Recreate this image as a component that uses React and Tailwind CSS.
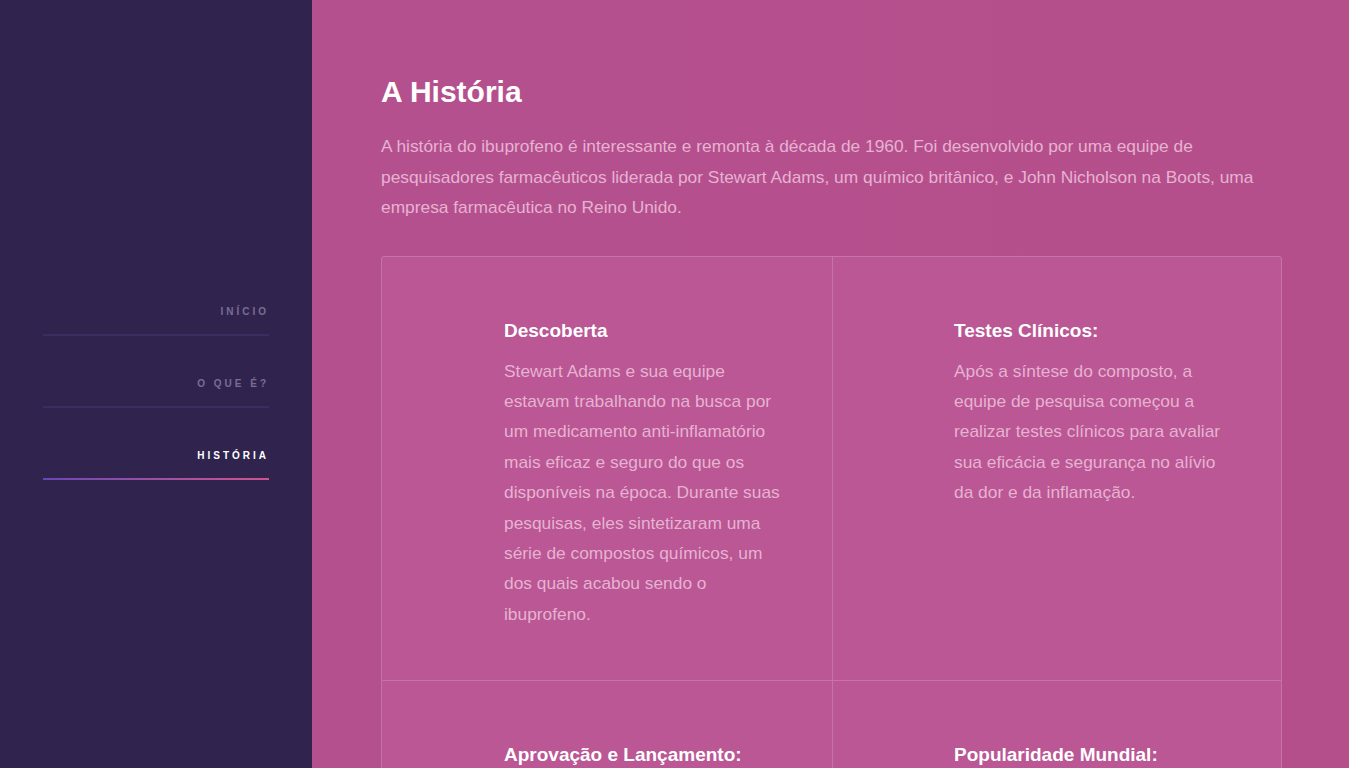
import React from 'react';

const navItems = [
  { label: 'Início', active: false },
  { label: 'O que é?', active: false },
  { label: 'História', active: true },
];

const steps = [
  {
    title: 'Descoberta',
    text: 'Stewart Adams e sua equipe estavam trabalhando na busca por um medicamento anti-inflamatório mais eficaz e seguro do que os disponíveis na época. Durante suas pesquisas, eles sintetizaram uma série de compostos químicos, um dos quais acabou sendo o ibuprofeno.',
  },
  {
    title: 'Testes Clínicos:',
    text: 'Após a síntese do composto, a equipe de pesquisa começou a realizar testes clínicos para avaliar sua eficácia e segurança no alívio da dor e da inflamação.',
  },
  {
    title: 'Aprovação e Lançamento:',
    text: 'Depois de anos de testes e estudos, o ibuprofeno foi aprovado para uso médico no Reino Unido em 1969 e, posteriormente, em outros países.',
  },
  {
    title: 'Popularidade Mundial:',
    text: 'Com o tempo, o ibuprofeno se tornou um dos analgésicos e anti-inflamatórios mais utilizados no mundo.',
  },
];

export default function App() {
  return (
    <div
      className="flex h-screen overflow-hidden bg-[#b54f8d]"
      style={{ fontFamily: '"Liberation Sans", Arial, sans-serif' }}
    >
      {/* sidebar */}
      <aside className="w-[312px] shrink-0 bg-[#30244f] pt-[264px] pl-[43px] pr-[43px]">
        <nav className="flex flex-col">
          {navItems.map((item) => (
            <a key={item.label} href="#" className="block pt-[40px]">
              <span
                className={
                  'block text-right text-[10px] font-bold uppercase leading-[15px] tracking-[3px] pb-[15px] ' +
                  (item.active ? 'text-white' : 'text-[#7c6c92]')
                }
              >
                {item.label}
              </span>
              {item.active ? (
                <div className="h-[2px] bg-gradient-to-r from-[#6a46b4] to-[#d0528f]" />
              ) : (
                <div className="h-[2px] bg-[#3b2c63]" />
              )}
            </a>
          ))}
        </nav>
      </aside>

      {/* main */}
      <main className="flex-1 overflow-y-auto bg-gradient-to-r from-[#b5508f] to-[#b54f8b]">
        <div className="pl-[69px] pr-[67px] pt-[74px] pb-20">
          <h1 className="text-[30px] font-bold leading-[36px] text-white">A História</h1>
          <p className="mt-[21px] text-[17.35px] leading-[30.5px] text-[#e6b2d2]">
            A história do ibuprofeno é interessante e remonta à década de 1960. Foi desenvolvido por uma equipe de
            pesquisadores farmacêuticos liderada por Stewart Adams, um químico britânico, e John Nicholson na Boots, uma
            empresa farmacêutica no Reino Unido.
          </p>

          <div className="mt-[33px] grid w-[901px] grid-cols-[451px_1fr] rounded-[3px] border border-[#c873a8] bg-[#ba5794]">
            {steps.map((s, i) => (
              <div
                key={s.title}
                className={
                  'pr-[40px] pt-[60px] pb-[51px] ' +
                  (i % 2 === 0 ? 'pl-[122px] border-r border-[#c873a8] ' : 'pl-[121px] ') +
                  (i < 2 ? 'border-b border-[#c873a8]' : '')
                }
              >
                <h3 className="text-[19px] font-bold leading-[27px] text-white">{s.title}</h3>
                <p className="mt-[12px] w-[276px] text-[17.35px] leading-[30.4px] text-[#e6b2d2]">{s.text}</p>
              </div>
            ))}
          </div>
        </div>
      </main>
    </div>
  );
}
